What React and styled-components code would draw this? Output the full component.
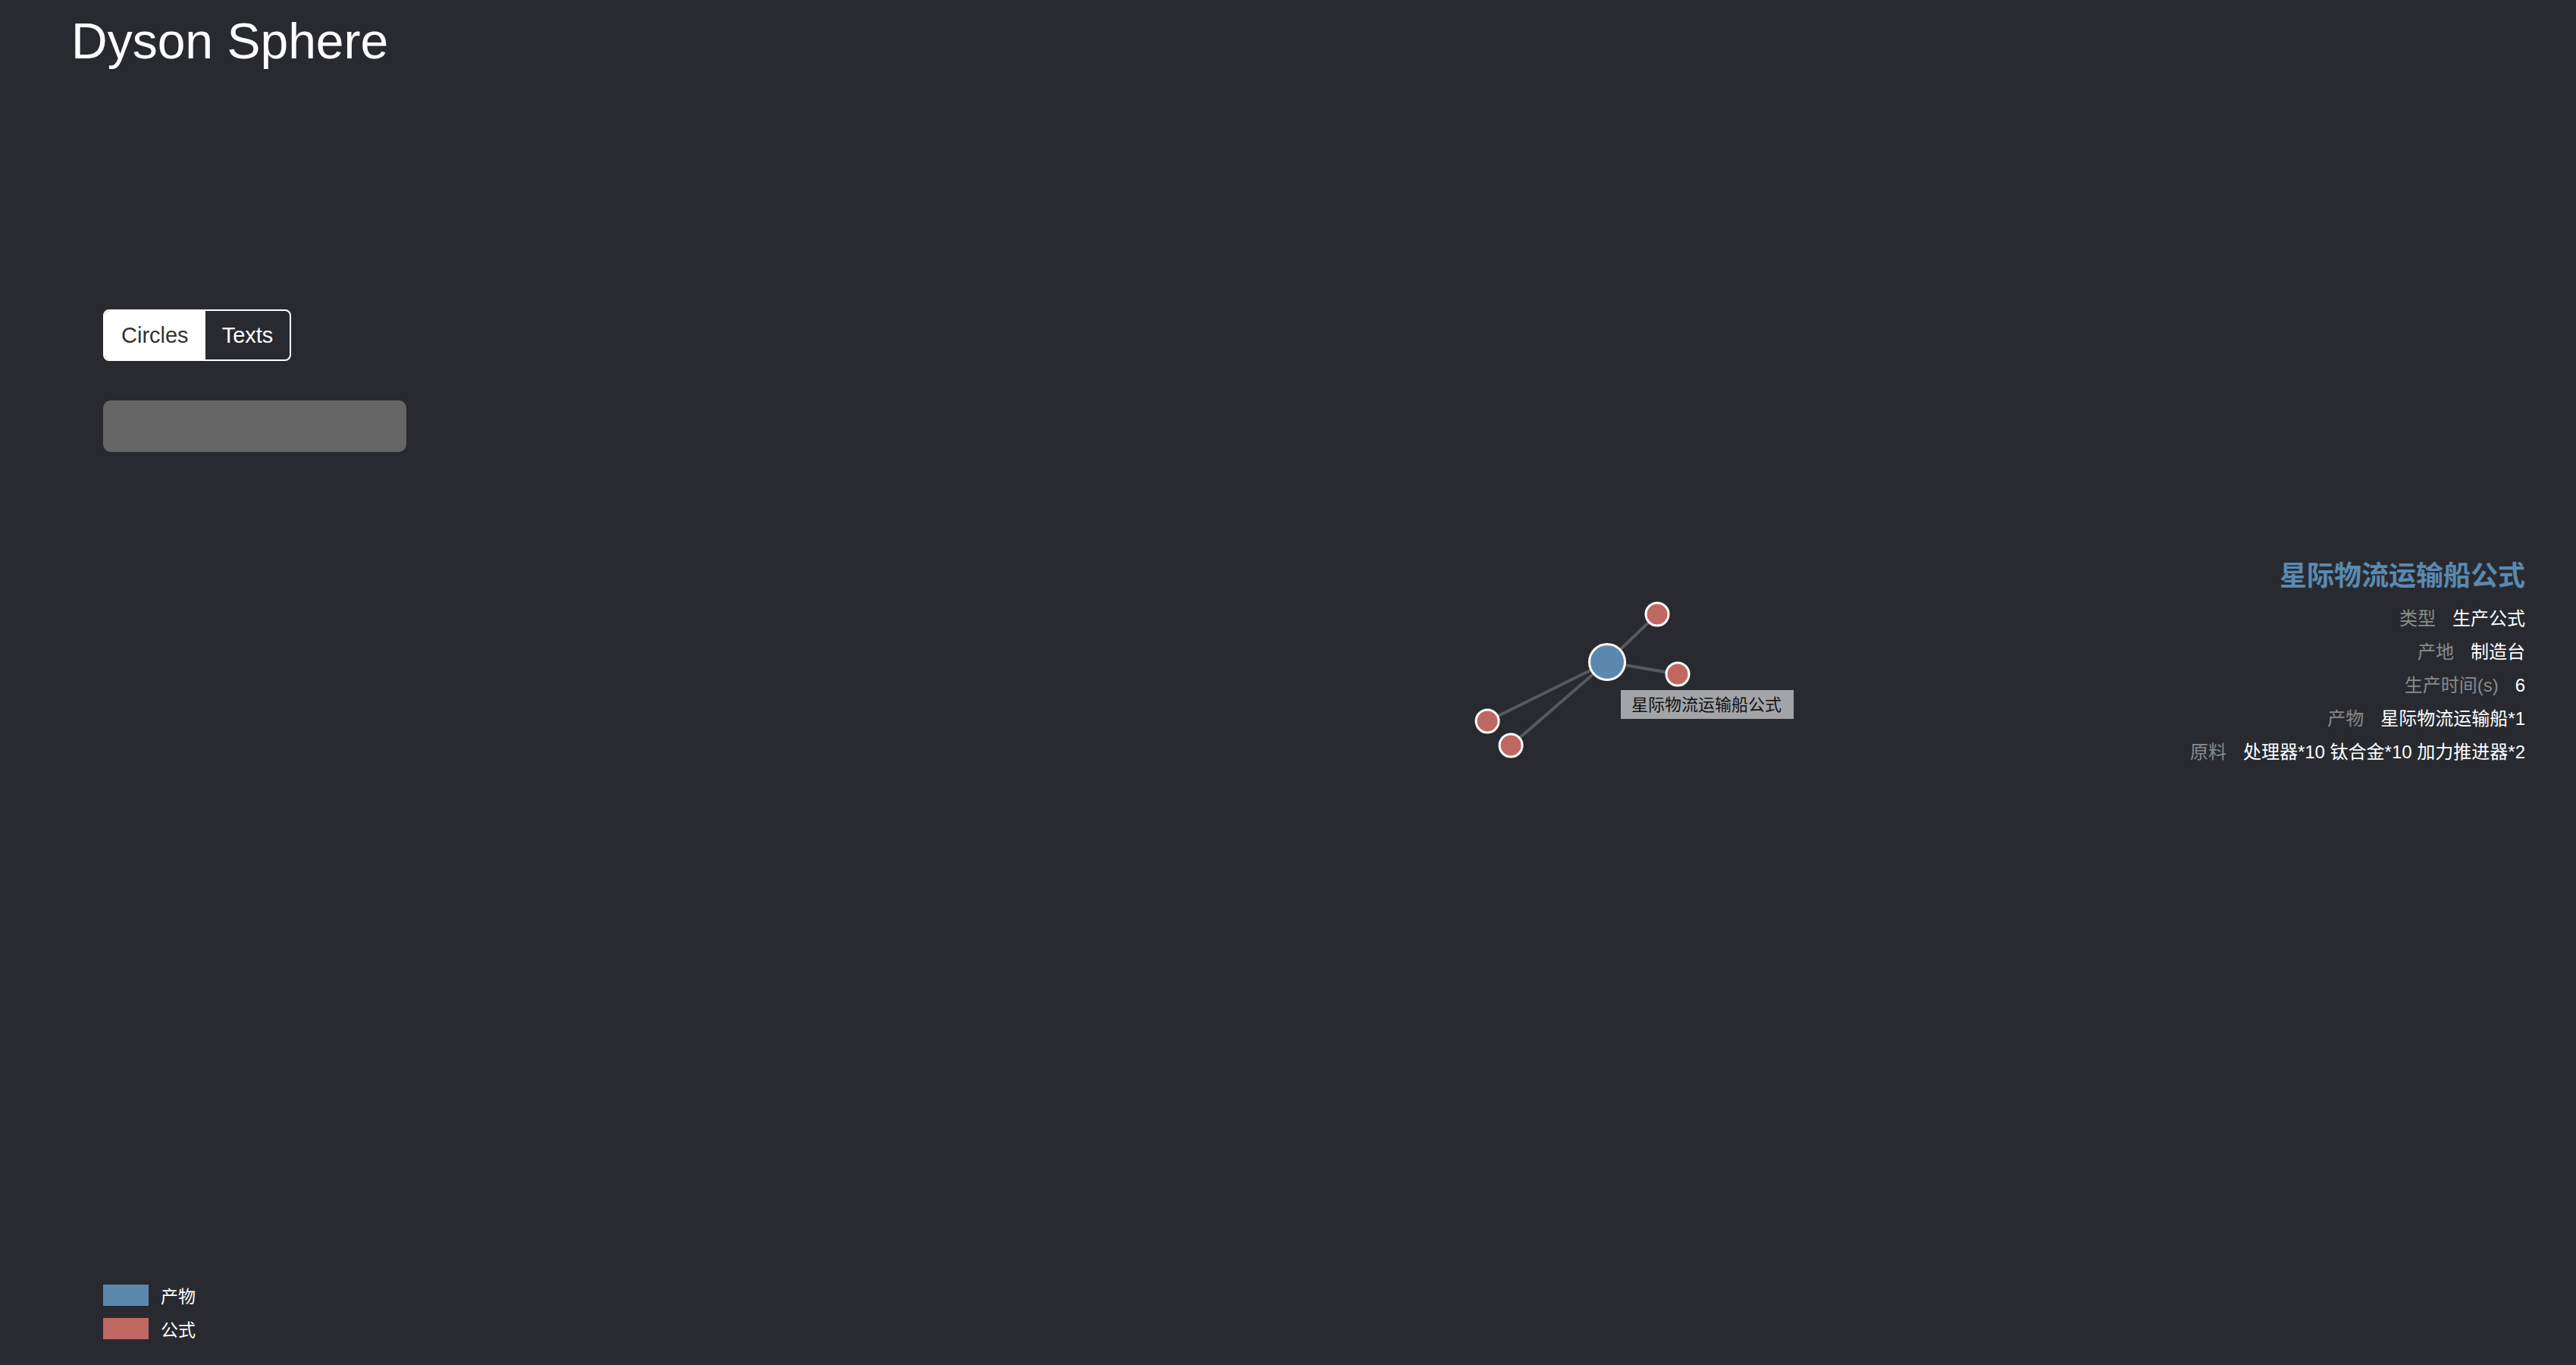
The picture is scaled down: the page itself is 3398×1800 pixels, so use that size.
import React, { useState } from "react";
import styled, { createGlobalStyle } from "styled-components";

const GlobalStyle = createGlobalStyle`
  html, body {
    margin: 0;
    padding: 0;
    background: #282a2f;
  }
  * { box-sizing: border-box; }
`;

const BLUE = "#5b88ad";
const RED = "#bf6862";

const Page = styled.div`
  position: relative;
  width: 3398px;
  height: 1800px;
  background: #282a2f;
  color: #fff;
  font-family: "Liberation Sans", "Noto Sans CJK SC", sans-serif;
  display: flex;
  flex-direction: column;
  overflow: hidden;
`;

const Canvas = styled.svg`
  position: absolute;
  inset: 0;
  pointer-events: none;
`;

const Title = styled.h1`
  position: relative;
  margin: 22px 0 0 94px;
  font-size: 66px;
  line-height: 64px;
  font-weight: 400;
  color: #fff;
`;

const Main = styled.div`
  position: relative;
  flex: 1;
  display: grid;
  grid-template-columns: 536px 1fr auto;
`;

const LeftColumn = styled.div`
  display: flex;
  flex-direction: column;
  align-items: flex-start;
  padding: 322px 0 34px 136px;
`;

const Toggle = styled.div`
  display: inline-flex;
  border: 2px solid #fff;
  border-radius: 8px;
  overflow: hidden;
`;

const ToggleButton = styled.button`
  height: 64px;
  padding: 0 22px;
  border: none;
  margin: 0;
  font-family: "Liberation Sans", sans-serif;
  font-size: 29px;
  background: ${(p) => (p.$active ? "#fff" : "transparent")};
  color: ${(p) => (p.$active ? "#333" : "#fff")};
  cursor: pointer;
`;

const SearchInput = styled.input`
  margin-top: 52px;
  width: 400px;
  height: 68px;
  border: none;
  border-radius: 10px;
  background: #666;
  outline: none;
`;

const Legend = styled.div`
  margin-top: auto;
  display: flex;
  flex-direction: column;
  gap: 16px;
`;

const LegendRow = styled.div`
  display: flex;
  align-items: center;
  gap: 16px;
  height: 28px;
  font-family: "Noto Sans CJK SC", sans-serif;
  font-size: 23px;
  line-height: 28px;
  color: #fff;
`;

const Swatch = styled.span`
  width: 60px;
  height: 28px;
  background: ${(p) => p.$color};
`;

const Spacer = styled.div``;

const InfoPanel = styled.div`
  display: flex;
  flex-direction: column;
  align-items: flex-end;
  padding: 646px 67px 0 0;
  font-family: "Liberation Sans", "Noto Sans CJK SC", sans-serif;
`;

const InfoTitle = styled.div`
  font-family: "Noto Sans CJK SC", sans-serif;
  font-size: 36px;
  line-height: 48px;
  font-weight: 700;
  color: #5a8ab2;
  margin-bottom: 14px;
`;

const InfoRow = styled.div`
  display: flex;
  justify-content: flex-end;
  align-items: center;
  gap: 22px;
  height: 44px;
  font-size: 24px;
  line-height: 44px;
`;

const InfoLabel = styled.span`
  color: #8a8a8a;
`;

const InfoValue = styled.span`
  color: #fff;
`;

const center = { x: 2120, y: 873 };
const reds = [
  { x: 2186, y: 810 },
  { x: 2213, y: 889 },
  { x: 1962, y: 951 },
  { x: 1993, y: 983 },
];

const rows = [
  ["类型", "生产公式"],
  ["产地", "制造台"],
  ["生产时间(s)", "6"],
  ["产物", "星际物流运输船*1"],
  ["原料", "处理器*10 钛合金*10 加力推进器*2"],
];

export default function App() {
  const [mode, setMode] = useState("circles");
  return (
    <Page>
      <GlobalStyle />
      <Canvas width="3398" height="1800" viewBox="0 0 3398 1800">
        {reds.map((r, i) => (
          <line
            key={i}
            x1={center.x}
            y1={center.y}
            x2={r.x}
            y2={r.y}
            stroke="#58595c"
            strokeWidth="4"
          />
        ))}
        {reds.map((r, i) => (
          <circle key={i} cx={r.x} cy={r.y} r="15" fill={RED} stroke="#fff" strokeWidth="3" />
        ))}
        <circle cx={center.x} cy={center.y} r="23.5" fill={BLUE} stroke="#fff" strokeWidth="3" />
        <rect x="2138" y="910" width="228" height="38" fill="#a3a4a8" />
        <text
          x="2152"
          y="937"
          fontSize="22"
          fill="#111"
          fontFamily="'Noto Sans CJK SC', sans-serif"
        >
          星际物流运输船公式
        </text>
      </Canvas>
      <Title>Dyson Sphere</Title>
      <Main>
        <LeftColumn>
          <Toggle>
            <ToggleButton $active={mode === "circles"} onClick={() => setMode("circles")}>
              Circles
            </ToggleButton>
            <ToggleButton $active={mode === "texts"} onClick={() => setMode("texts")}>
              Texts
            </ToggleButton>
          </Toggle>
          <SearchInput type="text" />
          <Legend>
            <LegendRow>
              <Swatch $color={BLUE} />
              产物
            </LegendRow>
            <LegendRow>
              <Swatch $color={RED} />
              公式
            </LegendRow>
          </Legend>
        </LeftColumn>
        <Spacer />
        <InfoPanel>
          <InfoTitle>星际物流运输船公式</InfoTitle>
          {rows.map(([l, v]) => (
            <InfoRow key={l}>
              <InfoLabel>{l}</InfoLabel>
              <InfoValue>{v}</InfoValue>
            </InfoRow>
          ))}
        </InfoPanel>
      </Main>
    </Page>
  );
}
